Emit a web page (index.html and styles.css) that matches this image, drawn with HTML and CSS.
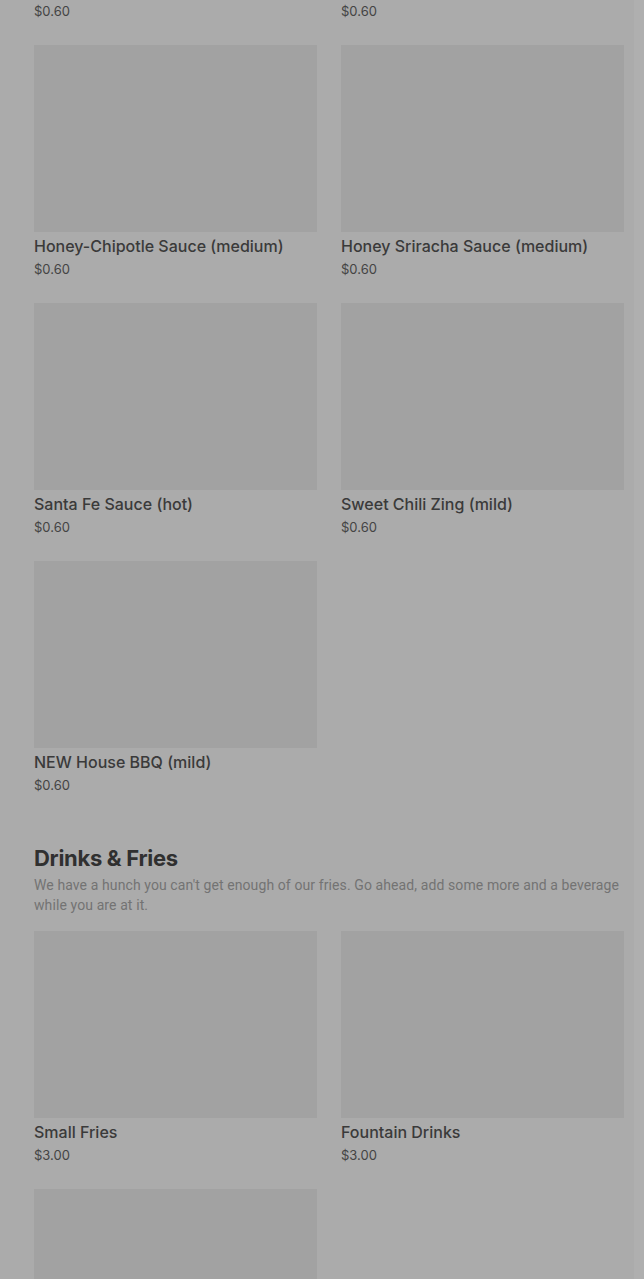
FILE: index.html
```html
<!DOCTYPE html>
<html lang="en">
<head>
  <meta charset="UTF-8">
  <title>Menu</title>
  <link rel="stylesheet" href="styles.css">
</head>
<body>
<div class="page">
  <section class="section first">
    <div class="grid">
      <div class="item">
        <div class="thumb"></div>
        <div class="name">Buffalo Sauce (hot)</div>
        <div class="price">$0.60</div>
      </div>
      <div class="item">
        <div class="thumb"></div>
        <div class="name">Garlic Parmesan Sauce (mild)</div>
        <div class="price">$0.60</div>
      </div>
      <div class="item">
        <div class="thumb"></div>
        <div class="name">Honey-Chipotle Sauce (medium)</div>
        <div class="price">$0.60</div>
      </div>
      <div class="item">
        <div class="thumb"></div>
        <div class="name">Honey Sriracha Sauce (medium)</div>
        <div class="price">$0.60</div>
      </div>
      <div class="item">
        <div class="thumb"></div>
        <div class="name">Santa Fe Sauce (hot)</div>
        <div class="price">$0.60</div>
      </div>
      <div class="item">
        <div class="thumb"></div>
        <div class="name">Sweet Chili Zing (mild)</div>
        <div class="price">$0.60</div>
      </div>
      <div class="item">
        <div class="thumb"></div>
        <div class="name">NEW House BBQ (mild)</div>
        <div class="price">$0.60</div>
      </div>
    </div>
  </section>

  <section class="section">
    <h2>Drinks &amp; Fries</h2>
    <p class="desc">We have a hunch you can't get enough of our fries. Go ahead, add some more and a beverage while you are at it.</p>
    <div class="grid">
      <div class="item">
        <div class="thumb"></div>
        <div class="name">Small Fries</div>
        <div class="price">$3.00</div>
      </div>
      <div class="item">
        <div class="thumb"></div>
        <div class="name">Fountain Drinks</div>
        <div class="price">$3.00</div>
      </div>
      <div class="item">
        <div class="thumb"></div>
        <div class="name">Large Fries</div>
        <div class="price">$4.00</div>
      </div>
    </div>
  </section>
</div>
</body>
</html>
```

FILE: styles.css
```css
html {
  background-color: #afafaf;
}
body {
  margin: 0;
  font-family: Inter, "Noto Sans", sans-serif;
  color: #383838;
}
.page {
  width: 634px;
  background-color: #ababab;
  padding: 0 10px 40px 34px;
  box-sizing: border-box;
}
.section.first {
  margin-top: -213px;
}
.section {
  margin-bottom: 50px;
}
.grid {
  display: grid;
  grid-template-columns: 283px 283px;
  column-gap: 24px;
  row-gap: 25px;
}
.thumb {
  height: 187px;
  background-color: #a2a2a2;
}
.name {
  margin-top: 4px;
  font-size: 16px;
  font-weight: 500;
  line-height: 20px;
  color: #3a3a3a;
}
.price {
  margin-top: 4px;
  font-size: 13px;
  line-height: 18px;
  color: #444;
}
h2 {
  margin: 0;
  font-size: 22px;
  font-weight: 700;
  line-height: 28px;
  letter-spacing: -0.3px;
  color: #303030;
}
.desc {
  margin: 3px 0 16px;
  font-family: Roboto, "Noto Sans", sans-serif;
  font-size: 14px;
  line-height: 20px;
  letter-spacing: 0.1px;
  color: #737373;
}
```
